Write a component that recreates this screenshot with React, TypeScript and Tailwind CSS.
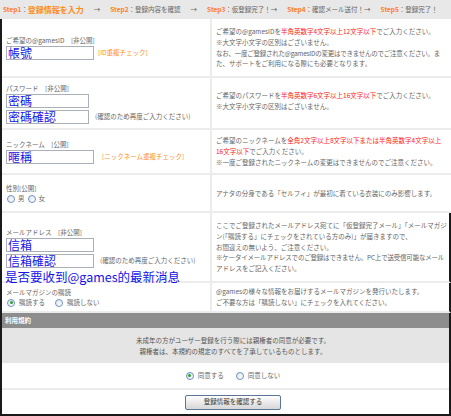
import React from 'react';

const jp = { fontFamily: '"Noto Sans CJK JP", "Noto Sans", sans-serif' };
const tc = { fontFamily: '"Noto Sans CJK TC", "Noto Sans", sans-serif' };

function Field({ value, width = 'w-[88px]' }: { value: string; width?: string }) {
    return (
        <div className={`${width} h-[14px] border border-[#aab0b8] bg-white pl-[1px] flex items-center`}>
            <span style={tc} className="text-[12px] leading-[12px] text-[#1414e6] whitespace-nowrap">
                {value}
            </span>
        </div>
    );
}

function Radio({ checked = false }: { checked?: boolean }) {
    return (
        <span className="w-[8px] h-[8px] rounded-full border border-[#6d8fbd] bg-gradient-to-br from-[#dfe6ef] to-white flex items-center justify-center shrink-0">
            {checked && <span className="w-[3px] h-[3px] rounded-full bg-[#2ea02e]" />}
        </span>
    );
}

function Red({ children }: { children: React.ReactNode }) {
    return <span className="text-[#ff1a1a]">{children}</span>;
}

function Row({ h, left, right, last }: { h: string; left: React.ReactNode; right: React.ReactNode; last?: boolean }) {
    return (
        <div className={`${h} grid grid-cols-[210px_1fr] border-b-2 border-[#ececec] ${last ? 'border-r-2 border-r-[#1a1a1a]' : ''}`}>
            <div className="border-r-2 border-[#ececec] pl-[4px] flex flex-col justify-center">{left}</div>
            <div className="pl-[4px] flex flex-col justify-center overflow-hidden whitespace-nowrap text-[6.5px] leading-[10.8px] text-[#666]">
                {right}
            </div>
        </div>
    );
}

function Label({ children }: { children: React.ReactNode }) {
    return <div className="text-[6.5px] leading-[11px] text-[#666]">{children}</div>;
}

export default function App() {
    return (
        <div style={jp} className="relative w-[451px] h-[416px] overflow-hidden bg-white">
            {/* steps */}
            <header className="h-[19px] bg-[#e8e8e8] flex items-center pl-[3px] whitespace-nowrap text-[6.5px] text-[#666]">
                <span className="font-bold text-[#ff7e1a]">Step1</span>
                <span>：</span>
                <span className="font-bold text-[8px] text-[#ff8c1a]">登録情報を入力</span>
                <span className="mx-[10px]">→</span>
                <span className="font-bold text-[#ff7e1a]">Step2</span>
                <span>：登録内容を確認</span>
                <span className="mx-[10px]">→</span>
                <span className="font-bold text-[#ff7e1a]">Step3</span>
                <span>：仮登録完了！→</span>
                <span className="ml-[10px] font-bold text-[#ff7e1a]">Step4</span>
                <span>：確認メール送付！→</span>
                <span className="ml-[10px] font-bold text-[#ff7e1a]">Step5</span>
                <span>：登録完了！</span>
            </header>

            <div className="border-l-2 border-[#1a1a1a]">
                <Row
                    h="h-[59px]"
                    left={
                        <>
                            <Label>ご希望の@gamesID　[非公開]</Label>
                            <div className="flex items-center gap-[4px]">
                                <Field value="帳號" />
                                <span className="text-[6.5px] text-[#ff8c1a]">[ID重複チェック]</span>
                            </div>
                        </>
                    }
                    right={
                        <>
                            <div>ご希望の@gamesIDを<Red>半角英数字4文字以上12文字以下</Red>でご入力ください。</div>
                            <div>※大文字小文字の区別はございません。</div>
                            <div className="tracking-[-0.25px]">なお、一度ご登録された@gamesIDの変更はできませんのでご注意ください。ま</div>
                            <div>た、サポートをご利用になる際にも必要となります。</div>
                        </>
                    }
                />
                <Row
                    h="h-[52px]"
                    left={
                        <>
                            <Label>パスワード　[非公開]</Label>
                            <Field value="密碼" width="w-[83px]" />
                            <div className="mt-[2px] flex items-center gap-[6px]">
                                <Field value="密碼確認" width="w-[83px]" />
                                <span className="text-[6.5px] text-[#666]">(確認のため再度ご入力ください)</span>
                            </div>
                        </>
                    }
                    right={
                        <div className="mb-[5px]">
                            <div>ご希望のパスワードを<Red>半角英数字6文字以上16文字以下</Red>でご入力ください。</div>
                            <div>※大文字小文字の区別はございません。</div>
                        </div>
                    }
                />
                <Row
                    h="h-[45px]"
                    left={
                        <>
                            <Label>ニックネーム　[公開]</Label>
                            <div className="flex items-center gap-[8px]">
                                <Field value="暱稱" />
                                <span className="text-[6.5px] text-[#ff8c1a]">[ニックネーム重複チェック]</span>
                            </div>
                        </>
                    }
                    right={
                        <>
                            <div>ご希望のニックネームを<Red>全角2文字以上8文字以下または半角英数字4文字以上</Red></div>
                            <div><Red>16文字以下</Red>でご入力ください。</div>
                            <div>※一度ご登録されたニックネームの変更はできませんのでご注意ください。</div>
                        </>
                    }
                />
                <Row
                    h="h-[38px]"
                    left={
                        <>
                            <Label>性別[公開]</Label>
                            <div className="flex items-center gap-[3px] text-[6.5px] text-[#666] pl-[1px]">
                                <Radio />
                                <span>男</span>
                                <Radio />
                                <span>女</span>
                            </div>
                        </>
                    }
                    right={<div>アナタの分身である「セルフィ」が最初に着ている衣装にのみ影響します。</div>}
                />
                <Row
                    h="h-[70px]"
                    last
                    left={
                        <>
                            <Label>メールアドレス　[非公開]</Label>
                            <Field value="信箱" />
                            <div className="mt-[2px] flex items-center gap-[6px]">
                                <Field value="信箱確認" />
                                <span className="text-[6.5px] text-[#666]">(確認のため再度ご入力ください)</span>
                            </div>
                        </>
                    }
                    right={
                        <>
                            <div>ここでご登録されたメールアドレス宛てに「仮登録完了メール」「メールマガジ</div>
                            <div>ン(「購読する」にチェックをされている方のみ)」が届きますので、</div>
                            <div>お間違えの無いよう、ご注意ください。</div>
                            <div className="tracking-[-0.2px]">※ケータイメールアドレスでのご登録はできません。PC上で送受信可能なメール</div>
                            <div>アドレスをご記入ください。</div>
                        </>
                    }
                />
                <Row
                    h="h-[30px]"
                    last
                    left={
                        <>
                            <Label>メールマガジンの購読</Label>
                            <div className="flex items-center text-[6.5px] text-[#666] pl-[1px]">
                                <Radio checked />
                                <span className="ml-[4px]">購読する</span>
                                <span className="ml-[10px]"><Radio /></span>
                                <span className="ml-[4px]">購読しない</span>
                            </div>
                        </>
                    }
                    right={
                        <>
                            <div>@gamesの様々な情報をお届けするメールマガジンを発行いたします。</div>
                            <div>ご不要な方は「購読しない」にチェックを入れてください。</div>
                        </>
                    }
                />

                <div className="border-r-2 border-[#1a1a1a] border-b-2 border-b-[#1a1a1a]">
                    <div className="h-[15px] bg-[#8d8d8d] flex items-center pl-[3px] text-[6.5px] font-bold text-white">利用規約</div>
                    <div className="h-[35px] bg-[#e5e5e5] pl-[15px] flex flex-col items-center justify-center text-[6.5px] leading-[10.5px] text-[#555]">
                        <div>未成年の方がユーザー登録を行う際には親権者の同意が必要です。</div>
                        <div>親権者は、本規約の規定のすべてを了承しているものとします。</div>
                    </div>
                    <div className="h-[27px] border-b-2 border-[#ececec] pl-[15px] flex items-center justify-center text-[6.5px] text-[#666]">
                        <Radio checked />
                        <span className="ml-[4px]">同意する</span>
                        <span className="ml-[12px]"><Radio /></span>
                        <span className="ml-[4px]">同意しない</span>
                    </div>
                    <div className="h-[24px] pl-[15px] flex items-center justify-center">
                        <button className="w-[96px] h-[15px] rounded-[2px] border border-[#5d7597] bg-gradient-to-b from-white to-[#d6d6d6] text-[6.5px] text-[#333]">
                            登録情報を確認する
                        </button>
                    </div>
                </div>
            </div>

            {/* annotation over the form */}
            <div style={tc} className="absolute left-[5px] top-[269px] text-[12.5px] leading-[15px] text-[#1414e6] whitespace-nowrap">
                是否要收到@games的最新消息
            </div>
        </div>
    );
}
